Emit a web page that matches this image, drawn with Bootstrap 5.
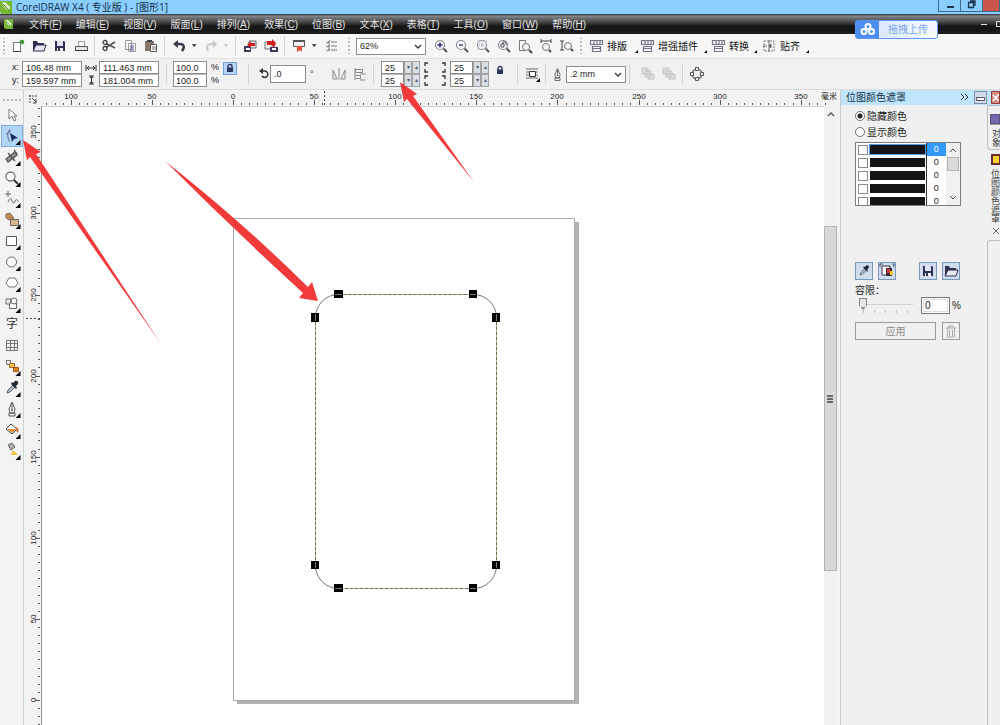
<!DOCTYPE html>
<html lang="zh-CN">
<head>
<meta charset="utf-8">
<meta name="viewport" content="width=device-width, initial-scale=1">
<title>CorelDRAW X4 ( 专业版 ) - [图形1]</title>
<link rel="stylesheet" href="https://cdn.jsdelivr.net/npm/bootstrap@5.3.0/dist/css/bootstrap.min.css">
<style>
body{font-family:"Liberation Sans","Noto Sans CJK SC",sans-serif;font-size:10px;line-height:13px;color:#1c1c1c;background:#f0f0f0;overflow:hidden}
button,input,select{font:inherit;color:inherit;border-radius:0}
button{background:none;border:0;padding:0}
svg{display:block;flex:none}
.titlebar{height:14px;background:#8acdff;font-family:"Open Sans","Noto Sans CJK SC",sans-serif;color:#14303f}
.winctl{height:12px;border:1px solid #3d6a8c;border-top:0}
.winctl button{width:22px;border-right:1px solid #3d6a8c}
.winctl .close-x{width:16px;background:#c9554d;border:0}
.menubar{height:20px;gap:14px;padding-left:29px;background:linear-gradient(#24272c 0,#85878a 2px,#5b5b5b 6px,#252525 11px,#141414 12px,#1b1b1b);color:#e4e4e4}
.menubar a{color:inherit;text-decoration:none;white-space:nowrap}
.upload{left:855px;top:20px;height:19px;width:83px;border-radius:3px;background:#4d8df2;border:1px solid #5b97f3;z-index:3}
.upload span{background:linear-gradient(90deg,#dbe9ff,#f6faff);color:#7ba6e8;border-radius:0 2px 2px 0}
.stdbar{height:25px;background:#f6f6f6;border-bottom:1px solid #e2e2e2}
.propbar{height:31px;padding-left:12px;background:#f1f1f1;border-bottom:1px solid #dcdcdc;font-size:9px}
.cell{width:21px;height:21px;display:flex;align-items:center;justify-content:center;flex:none}
.drop{width:11px;height:21px;display:flex;align-items:center;justify-content:center;flex:none}
.div7{width:7px;height:20px;flex:none;background:linear-gradient(#d2d2d2,#d2d2d2) center/1px 100% no-repeat}
.w14{width:14px}.w22{width:22px}.w17{width:17px}
.grip{width:7px;height:16px;flex:none;background:radial-gradient(circle,#bbb 1px,transparent 1px) center/4px 4px repeat-y}
.pluginbtn{display:flex;align-items:center;gap:3px;white-space:nowrap;flex:none;color:#111}
.field{display:block;height:13px;padding:0 3px;border:1px solid #8c8c8c;background:#fff;line-height:11px;min-width:0}
.field+.field,.spinrow+.spinrow .field{border-top-color:#b8b8b8}
.f60{width:60px}.f34{width:34px;padding:0 2px}.f36{width:36px;height:18px}.f24{width:23px}
.spinrow{display:flex;height:13px}
.spinrow button{width:8px;border:1px solid #a2a2a2;background:#d9dde4;color:#555a6b;font-size:6px;line-height:11px;text-align:center}
.combo{position:relative;flex:none}
.combo select{appearance:none;width:100%;height:17px;border:1px solid #8c8c8c;background:#fff;padding:0 3px;line-height:15px;font-size:9px}
.combo svg{position:absolute;right:4px;top:6px;pointer-events:none}
.lockbtn{width:14px;height:13px;border:1px solid #6ba0d4;background:#b5d5f4;display:flex;align-items:center;justify-content:center;margin-bottom:12px}
.toolbox{width:24px;background:#f3f3f3;border-right:1px solid #cfcfcf;padding:4px 0 0 2px}
.toolbox .tgrip{height:11px;width:20px;background:radial-gradient(circle,#bbb 1px,transparent 1px) 0 4px/4px 4px repeat-x}
.toolbox button{display:block;width:20px;height:20px;margin-bottom:1px}
.toolbox button.active{background:#b3d6f7;outline:1px solid #78b0e2}
.stage{display:grid;grid-template-columns:17px minmax(0,1fr) 16px;grid-template-rows:16px minmax(0,1fr);background:#f3f3f3}
.ruler{position:relative;overflow:hidden}
.toprule{grid-column:2/4}
.paper{position:relative;background:#fefefe;overflow:hidden;border-top:1px solid #d0d0d0;border-left:1px solid #8f8f8f}
.ruler text{font-size:8px;fill:#222;text-anchor:middle}
.vscroll{width:13px;background:#f1f1f1;padding-top:4px}
.vthumb{margin-top:107px;height:345px;background:#d8d8d8;border:1px solid #b4b4b4}
.docker{width:160px;border-left:1px solid #c9c9c9;background:#f0f0f0}
.dhead{height:15px;background:#bfe5fd;padding-left:5px;color:#14303f}
.dhead button{width:13px;height:13px;border:1px solid #7b8ea5;background:#d3dbe8;display:flex;align-items:center;justify-content:center}
.dhead button.shut{width:9px;border-color:#943a36;background:#d98a84}
.dbody{padding:3px 14px 0 14px;width:133px}
.radio{display:flex;align-items:center;gap:2px;height:16px}
.radio input{appearance:none;width:10px;height:10px;border:1px solid #707070;border-radius:50%;background:#fff;margin:0}
.radio input:checked{background:radial-gradient(circle,#222 2px,#fff 3px)}
.masks{width:106px;height:64px;border:1px solid #7d7d7d;background:#fff;margin-top:2px;overflow:hidden}
.masks table{width:90px;border-collapse:collapse;table-layout:fixed;font-size:9px;line-height:13px}
.masks tr{height:13px}
.masks td{padding:0;height:13px}
.masks input{appearance:none;display:block;width:10px;height:10px;border:1px solid #8a8a8a;background:#fff;margin:0 0 0 2px}
.swatch{height:9px;margin:2px 1px;background:#151515}
.masks td:last-child{text-align:center;border-left:1px solid #333}
.masks tr.on td:last-child{background:#3398fb;color:#fff}
.masks tr.on .swatch{outline:1px solid #4ea3ef}
.mscroll{width:14px;background:#f1f1f1}
.mscroll i{display:block;height:14px;border:1px solid #b5b5b5;background:#dadada;margin:0 1px}
.toolbtn{width:18px;height:18px;border:1px solid #7798bb;background:#cfdded;display:flex;align-items:center;justify-content:center}
.tol{appearance:none;width:54px;height:12px;margin:0 0 0 4px;background:linear-gradient(#cfcfcf,#cfcfcf) center/100% 1px no-repeat}
.tol::-webkit-slider-thumb{appearance:none;width:8px;height:12px;background:linear-gradient(#e4e4e4,#e4e4e4) center 1px/6px 8px no-repeat #8c8c8c;clip-path:polygon(0 0,100% 0,100% 65%,50% 100%,0 65%)}
.ticks{height:3px;width:46px;margin-left:8px;background:repeating-linear-gradient(90deg,#c2c2c2 0 1px,transparent 1px 11px)}
.pct{width:29px;height:17px;border:1px solid #777;padding:0 3px;background:#fff;outline:1px solid #ddd;outline-offset:-3px;flex:none}
.apply{height:18px;border:1px solid #9a9a9a;color:#8d8d8d;flex:none}
.tabs{width:13px;overflow:hidden;color:#444}
.tab1{height:45px;border:1px solid #bcbcbc;border-right:0;border-radius:0 0 0 4px;padding:8px 0 0 2px}
.vtext{writing-mode:vertical-rl;line-height:11px;white-space:nowrap;display:block;width:11px;font-size:9px}
.tabs>.vtext{margin-left:2px}
.tabrest{border:1px solid #bcbcbc;border-right:0;border-bottom:0;border-radius:4px 0 0 0}
.notes{left:0;top:0;pointer-events:none;z-index:4}
</style>
<script src="https://cdn.jsdelivr.net/npm/bootstrap@5.3.0/dist/js/bootstrap.bundle.min.js"></script>
</head>
<body>
<svg width="0" height="0" class="position-absolute" aria-hidden="true">
<defs>
<symbol id="down" viewBox="0 0 7 5"><path d="M0 0h6L3 4z" fill="#222"/></symbol>
<symbol id="chev" viewBox="0 0 8 5"><path d="M1 1l3 3 3-3" fill="none" stroke="#333" stroke-width="1.300"/></symbol>
<symbol id="fly" viewBox="0 0 20 20"><path d="M18.500 14v5h-5z" fill="#000"/></symbol>
<symbol id="save" viewBox="0 0 16 16"><path d="M3 3h9l1 1v9H3z" fill="#2f3154"/><path d="M5 3h6v5H5z" fill="#dfe4f3"/><path d="M5 10h6v3H5z" fill="#f5f5f5"/><path d="M6 10h2v3H6z" fill="#2f3154"/></symbol>
<symbol id="open" viewBox="0 0 16 16"><path d="M2 13V3h4l1 2h6v2" fill="#2f3154"/><path d="M2 13l3-6h10l-2 6z" fill="#e6e9f2" stroke="#2f3154"/><path d="M2 13V4h2v6z" fill="#2f3154"/></symbol>
<symbol id="lens" viewBox="0 0 16 16"><circle cx="7" cy="7" r="4.500" fill="#f4f6fb" stroke="#8b8e9a" stroke-width="1.200"/><path d="M10.500 10.500L14 14" stroke="#55535c" stroke-width="2"/></symbol>
<symbol id="plug" viewBox="0 0 16 16"><path d="M2.500 2.500h12v4h-12zM6 2v5M9 2v5M12 2v5M4.500 8.500h8v5h-8zM4.500 10.500h8" fill="none" stroke="#77758a" stroke-width="1.200"/></symbol>
<symbol id="lock" viewBox="0 0 10 10"><path d="M3 5V3.500a2 2 0 0 1 4 0V5" fill="none" stroke="#2c3560" stroke-width="1.300"/><path d="M2 4.500h6V9H2z" fill="#2c3560"/></symbol>
<symbol id="drop" viewBox="0 0 20 20"><path d="M5 15l1-3 5-5 2 2-5 5z" fill="#a9bccd" stroke="#444" stroke-width=".8"/><path d="M9 6l5 5 1-1-1-2 2-2c1-2-1-4-3-3l-2 2-1-1z" fill="#252a38"/></symbol>
<symbol id="nib" viewBox="0 0 20 20"><path d="M10 3L7 10l1 4h4l1-4zM7 14h6v3H7zM10 4v6" fill="#f8f8f8" stroke="#555"/><circle cx="10" cy="11" r="1" fill="#555"/></symbol>
<symbol id="logo" viewBox="0 0 12 13"><path d="M0 0h12v13H2l-2-2z" fill="#78b832"/><path d="M2 2l3-1 5 5-1 4-4-3z" fill="#e9f7d8"/><path d="M3 3l5 5M8 8l2 3" stroke="#3f7d19"/></symbol>
</defs>
</svg>

<div class="vh-100 d-flex flex-column position-relative overflow-hidden">
<header class="titlebar d-flex align-items-center">
  <svg width="12" height="13"><use href="#logo"/></svg>
  <span class="ms-1 text-nowrap">CorelDRAW X4 ( 专业版 ) - [图形1]</span>
  <div class="winctl d-flex ms-auto align-self-start">
    <button aria-label="最小化"><svg width="21" height="11"><path d="M8 6h7v2H8z" fill="#1d3549"/></svg></button>
    <button aria-label="还原"><svg width="21" height="11"><path d="M7.500 2.500h5v5h-5zM9 1h5v5" fill="none" stroke="#1d3549" stroke-width="1.300"/></svg></button>
    <button class="close-x" aria-label="关闭"></button>
  </div>
</header>

<nav class="menubar d-flex align-items-center position-relative">
  <svg class="position-absolute start-0 ms-1" width="9" height="12"><use href="#logo"/></svg>
  <a href="#">文件(<u>F</u>)</a><a href="#">编辑(<u>E</u>)</a><a href="#">视图(<u>V</u>)</a><a href="#">版面(<u>L</u>)</a><a href="#">排列(<u>A</u>)</a><a href="#">效果(<u>C</u>)</a><a href="#">位图(<u>B</u>)</a><a href="#">文本(<u>X</u>)</a><a href="#">表格(<u>T</u>)</a><a href="#">工具(<u>O</u>)</a><a href="#">窗口(<u>W</u>)</a><a href="#">帮助(<u>H</u>)</a>
  <svg class="ms-auto" width="20" height="12"><path d="M1 6h6v1H1zM16 3h4v1h-3v4h3v1h-4z" fill="#ddd"/></svg>
</nav>
<button class="upload position-absolute d-flex align-items-stretch">
  <svg width="23" height="17" viewBox="0 0 23 17"><g fill="none" stroke="#fff" stroke-width="2"><circle cx="12" cy="5.500" r="2.500"/><circle cx="8" cy="10.500" r="2.500"/><circle cx="15.500" cy="10.500" r="2.500"/></g></svg>
  <span class="flex-grow-1 d-flex align-items-center justify-content-center">拖拽上传</span>
</button>

<div class="stdbar d-flex align-items-center">
  <span class="grip"></span>
  <button class="cell" aria-label="新建"><svg width="16" height="16"><path d="M3.500 4.500h7v9h-7z" fill="#fff" stroke="#777"/><path d="M3 13.500h8" fill="none" stroke="#444"/><circle cx="12" cy="4" r="2.300" fill="#3f9a35"/></svg></button>
  <button class="cell" aria-label="打开"><svg width="16" height="16"><use href="#open"/></svg></button>
  <button class="cell" aria-label="保存"><svg width="16" height="16"><use href="#save"/></svg></button>
  <button class="cell" aria-label="打印"><svg width="16" height="16"><path d="M5.500 3.500h6v5h-6z" fill="#fff" stroke="#999"/><path d="M2.500 8.500h12v4h-12z" fill="#e6e6e6" stroke="#555"/><path d="M2 12h13v1H2z" fill="#333"/></svg></button>
  <span class="div7"></span>
  <button class="cell" aria-label="剪切"><svg width="16" height="16"><path d="M14 4L5 9.500M14 10L5 5.500" stroke="#555" stroke-width="1.500"/><circle cx="4" cy="4.500" r="2" fill="none" stroke="#444" stroke-width="1.300"/><circle cx="4" cy="10.500" r="2" fill="none" stroke="#444" stroke-width="1.300"/></svg></button>
  <button class="cell" aria-label="复制"><svg width="16" height="16"><path d="M3.500 2.500h6v9h-6zM6.500 5.500h7v8h-7z" fill="#f4f4f4" stroke="#999"/><path d="M8 8h4M8 10h4M8 12h4" stroke="#555d8a"/></svg></button>
  <button class="cell" aria-label="粘贴"><svg width="16" height="16"><path d="M2 3h9v10H2z" fill="#8a7668"/><path d="M4 2h5v2H4z" fill="#444"/><path d="M7.500 6.500h6v7h-6z" fill="#fff" stroke="#555"/><path d="M9 9h4M9 11h4" stroke="#777"/></svg></button>
  <span class="div7"></span>
  <button class="cell" aria-label="撤消"><svg width="16" height="16"><path d="M4 6h5c4 0 5 3 2 7" fill="none" stroke="#3b3a4a" stroke-width="2.500"/><path d="M2 6l5-4v8z" fill="#3b3a4a"/></svg></button>
  <button class="drop" aria-label="撤消列表"><svg width="5" height="4"><use href="#down"/></svg></button>
  <button class="cell" aria-label="重做"><svg width="16" height="16"><path d="M12 6H8c-4 0-5 3-3 7" fill="none" stroke="#c6c6c6" stroke-width="2"/><path d="M14 6l-4-4v8z" fill="#c6c6c6"/></svg></button>
  <button class="drop opacity-25" aria-label="重做列表"><svg width="5" height="4"><use href="#down"/></svg></button>
  <span class="div7"></span>
  <button class="cell" aria-label="导入"><svg width="16" height="16"><path d="M7 3h7v7H7z" fill="#eee" stroke="#666"/><path d="M2 8h7v6H2z" fill="#3a3c5b"/><path d="M4 10h4v2H4z" fill="#fff"/><path d="M13 5H9V3L5 7l4 3V8h4z" fill="#cf2020"/></svg></button>
  <button class="cell" aria-label="导出"><svg width="16" height="16"><path d="M2 4h7v7H2z" fill="#eee" stroke="#777"/><path d="M7 9h8v5H7z" fill="#3a3c5b"/><path d="M9 10h4v2H9z" fill="#fff"/><path d="M4 3h5V1l4 4-2 5-2-3H4z" fill="#cf2020"/></svg></button>
  <span class="div7"></span>
  <button class="cell" aria-label="应用程序启动器"><svg width="16" height="16"><path d="M2.500 2.500h11v6h-11z" fill="#efefef" stroke="#555"/><path d="M2 2h12v2H2z" fill="#555"/><path d="M6 8h5v6l-2-2-3 2z" fill="#e24a33"/></svg></button>
  <button class="drop" aria-label="启动器列表"><svg width="5" height="4"><use href="#down"/></svg></button>
  <button class="cell" aria-label="选项"><svg width="16" height="16"><path d="M3 4l2 1 2-3M3 8l2 1 2-2M3 12l2 1 2-2M8 4h6M8 8h6M8 12h6M6 3v10" fill="none" stroke="#777"/></svg></button>
  <span class="grip mx-1"></span>
  <div class="combo me-1" style="width:70px"><select aria-label="缩放级别"><option>62%</option></select><svg width="8" height="5"><use href="#chev"/></svg></div>
  <button class="cell" aria-label="放大"><svg width="16" height="16"><use href="#lens"/><path d="M4.500 7h5M7 4.500v5" stroke="#33357a" stroke-width="1.500"/></svg></button>
  <button class="cell" aria-label="缩小"><svg width="16" height="16"><use href="#lens"/><path d="M5 7h4" stroke="#444a7a" stroke-width="1.500"/></svg></button>
  <button class="cell" aria-label="缩放选定对象"><svg width="16" height="16"><use href="#lens"/><path d="M4 7h6M7 4v6" stroke="#8a8a99" stroke-dasharray="1 1"/><path d="M2.500 2.500h9v9h-9z" fill="none" stroke="#aaa" stroke-dasharray="1 2"/></svg></button>
  <button class="cell" aria-label="缩放全部对象"><svg width="16" height="16"><use href="#lens"/><path d="M5 9V6h3v3zM7 6V4h3v3" fill="none" stroke="#555"/></svg></button>
  <button class="cell" aria-label="缩放页面"><svg width="16" height="16"><path d="M2.500 2.500h6v10h-6z" fill="#fff" stroke="#777"/><circle cx="9" cy="9" r="3.500" fill="#f4f4f8" stroke="#777"/><path d="M12 12l3 3" stroke="#444" stroke-width="2"/></svg></button>
  <button class="cell" aria-label="缩放页宽"><svg width="16" height="16"><path d="M3 1v4M13 1v4M3 3h10" stroke="#444"/><circle cx="8" cy="9" r="3.500" fill="#f4f4f8" stroke="#777"/><path d="M11 12l2 2" stroke="#444" stroke-width="2"/></svg></button>
  <button class="cell" aria-label="缩放页高"><svg width="16" height="16"><path d="M1 3h4M1 12h4M3 3v9" stroke="#444"/><circle cx="9" cy="8" r="3.500" fill="#f4f4f8" stroke="#777"/><path d="M12 11l2 2" stroke="#444" stroke-width="2"/></svg></button>
  <span class="grip me-1"></span>
  <button class="pluginbtn"><svg width="16" height="16"><use href="#plug"/></svg>排版<svg width="9" height="16"><path d="M8 12v3H5z"/></svg></button>
  <button class="pluginbtn"><svg width="16" height="16"><use href="#plug"/></svg>增强插件<svg width="9" height="16"><path d="M6 12v3H3z"/></svg></button>
  <button class="pluginbtn"><svg width="16" height="16"><use href="#plug"/></svg>转换<svg width="9" height="16"><path d="M5 12v3H2z"/></svg></button>
  <button class="pluginbtn"><svg width="16" height="16"><path d="M3 3h10v10H3z" fill="none" stroke="#777" stroke-dasharray="2 1"/><path d="M8 2v12M2 8h4M10 6v4L8 8z" stroke="#666" fill="#555"/></svg>贴齐<svg width="9" height="16"><path d="M6 12v3H3z"/></svg></button>
</div>

<div class="propbar d-flex align-items-center">
  <div style="width:10px"><label class="d-block" for="px">x:</label><label class="d-block" for="py">y:</label></div>
  <div><input class="field f60" id="px" value="106.48 mm"><input class="field f60" id="py" value="159.597 mm"></div>
  <svg width="17" height="26"><path d="M4 4v6M14 4v6M5 7h8M7 5L5 7l2 2M11 5l2 2-2 2M7 15h5M7 23h5M9.500 15v8M8 17l1.500-2 1.500 2M8 21l1.500 2 1.500-2" fill="none" stroke="#333"/></svg>
  <div><input class="field f60" aria-label="宽度" value="111.463 mm"><input class="field f60" aria-label="高度" value="181.004 mm"></div>
  <span class="div7 w14"></span>
  <div><input class="field f34" id="sx" value="100.0"><input class="field f34" id="sy" value="100.0"></div>
  <div class="ps-1" style="width:16px"><label class="d-block" for="sx">%</label><label class="d-block" for="sy">%</label></div>
  <button class="lockbtn" aria-label="锁定比率"><svg width="10" height="10"><use href="#lock"/></svg></button>
  <span class="div7 w22"></span>
  <svg width="11" height="12" viewBox="0 0 11 12"><path d="M2 3h4a3.200 3.200 0 1 1-3 5" fill="none" stroke="#333" stroke-width="1.500"/><path d="M4 0v6L0 3z" fill="#333"/></svg>
  <input class="field f36" id="rot" value=".0"><label class="ps-1" style="width:22px" for="rot">°</label>
  <button class="cell" aria-label="镜像"><svg width="16" height="16"><path d="M2 13V4l4 9zM14 13V4l-4 9zM8 2v12" fill="none" stroke="#888"/></svg></button>
  <button class="cell" aria-label="对齐"><svg width="16" height="16"><path d="M3 2v12M3.500 3.500h7v3h-7zM3.500 9.500h5v3h-5M8 8h6M8 14h5" fill="none" stroke="#888"/></svg></button>
  <span class="div7 me-1"></span>
  <div>
    <div class="spinrow"><input class="field f24" aria-label="左上圆角" value="25"><button aria-label="减">▾</button><button aria-label="加">▴</button></div>
    <div class="spinrow"><input class="field f24" aria-label="左下圆角" value="25"><button aria-label="减">▾</button><button aria-label="加">▴</button></div>
  </div>
  <svg width="30" height="26"><path d="M8 2H5v3M5 8v3h3M22 2h3v3M25 8v3h-3M8 15H5v3M5 21v3h3M22 15h3v3M25 21v3h-3" fill="none" stroke="#333" stroke-width="1.300"/></svg>
  <div>
    <div class="spinrow"><input class="field f24" aria-label="右上圆角" value="25"><button aria-label="减">▾</button><button aria-label="加">▴</button></div>
    <div class="spinrow"><input class="field f24" aria-label="右下圆角" value="25"><button aria-label="减">▾</button><button aria-label="加">▴</button></div>
  </div>
  <button class="cell me-1" aria-label="全部圆角"><svg class="mb-2" width="10" height="10"><use href="#lock"/></svg></button>
  <span class="div7"></span>
  <button class="cell" aria-label="段落文本换行"><svg width="16" height="16"><path d="M2 3h12M2 6h3M2 9h3M2 12h12M12 6h2M12 9h2" stroke="#666"/><path d="M5.500 5.500h6v5h-6z" fill="#fff" stroke="#333"/><path d="M16 12v4h-4z"/></svg></button>
  <span class="div7"></span>
  <svg width="17" height="17"><use href="#nib"/></svg>
  <div class="combo" style="width:60px"><select aria-label="轮廓宽度"><option>.2 mm</option></select><svg width="8" height="5"><use href="#chev"/></svg></div>
  <span class="div7 me-1"></span>
  <button class="cell" aria-label="到图层前面"><svg width="16" height="16"><path d="M2 2h6v6H2zM5 5h6v6H5zM8 8h6v5H8z" fill="#ddd" stroke="#c4c4c4"/></svg></button>
  <button class="cell" aria-label="到图层后面"><svg width="16" height="16"><path d="M2 2h6v6H2zM5 5h6v6H5zM8 8h6v5H8z" fill="#ddd" stroke="#c4c4c4"/></svg></button>
  <span class="div7"></span>
  <button class="cell" aria-label="转换为曲线"><svg width="16" height="16"><circle cx="8" cy="8" r="5" fill="none" stroke="#666" stroke-width="1.200"/><path d="M6.500 1.500h3v3h-3zM6.500 11.500h3v3h-3zM1.500 6.500h3v3h-3zM11.500 6.500h3v3h-3z" fill="#f1f1f1" stroke="#555"/></svg></button>
</div>

<main class="d-flex flex-grow-1" style="min-height:0">
  <div class="toolbox flex-shrink-0">
    <div class="tgrip"></div>
    <button aria-label="挑选"><svg width="20" height="20"><path d="M7 4v10l3-3 2 5 2-1-2-4h3z" fill="#fff" stroke="#777"/></svg></button>
    <button class="active" aria-label="形状"><svg width="20" height="20"><path d="M8 3c-3 4-3 8 0 13M4 8l5-3" fill="none" stroke="#668" /><path d="M8 7l8 5-4 1-2 3z" fill="#1e2c60"/><use href="#fly"/></svg></button>
    <button aria-label="裁剪"><svg width="20" height="20"><path d="M4 12l9-7 2 3-9 7zM6 6l7 8M12 3l3 4" fill="#999" stroke="#555" stroke-width="1.300"/><use href="#fly"/></svg></button>
    <button aria-label="缩放"><svg width="20" height="20"><circle cx="8.500" cy="8.500" r="4.500" fill="#fdfdfd" stroke="#777" stroke-width="1.300"/><path d="M12 12l4 4" stroke="#333" stroke-width="2"/><use href="#fly"/></svg></button>
    <button aria-label="手绘"><svg width="20" height="20"><path d="M6 2v6M3 5h6M6 13c2-5 3-4 4-1s2 3 3 0 3 0 4 1" fill="none" stroke="#666"/><use href="#fly"/></svg></button>
    <button aria-label="智能填充"><svg width="20" height="20"><path d="M4 4l4-1 4 5-3 3-5-3z" fill="#c3874e" stroke="#777"/><path d="M8.500 9.500h8v6h-8z" fill="#d8b68c" stroke="#666"/><use href="#fly"/></svg></button>
    <button aria-label="矩形"><svg width="20" height="20"><path d="M4.500 5.500h10v9h-10z" fill="#fff" stroke="#555"/><use href="#fly"/></svg></button>
    <button aria-label="椭圆形"><svg width="20" height="20"><circle cx="9.500" cy="10" r="5" fill="#fff" stroke="#666"/><use href="#fly"/></svg></button>
    <button aria-label="多边形"><svg width="20" height="20"><path d="M7 5h6l3 5-3 4H7l-3-4z" fill="#fff" stroke="#777"/><use href="#fly"/></svg></button>
    <button aria-label="基本形状"><svg width="20" height="20"><path d="M7.500 8.500h7v6h-7z" fill="#fff" stroke="#666"/><circle cx="12" cy="7" r="3" fill="#fff" stroke="#666"/><path d="M4 5l5 0-1 5H4z" fill="#eee" stroke="#666"/><use href="#fly"/></svg></button>
    <button aria-label="文本"><svg width="20" height="20"><text x="4" y="13" font-size="12" fill="#333">字</text></svg></button>
    <button aria-label="表格"><svg width="20" height="20"><path d="M4.500 4.500h11v10h-11zM4 7.500h11M4 11.500h11M8.500 4v10M12.500 4v10" fill="none" stroke="#777"/></svg></button>
    <button aria-label="交互式调和"><svg width="20" height="20"><path d="M4.500 3.500h4v4h-4z" fill="#eee" stroke="#777"/><path d="M7.500 6.500h5v4h-5z" fill="#f4bd57" stroke="#a36a22"/><path d="M11.500 10.500h5v4h-5z" fill="#e37d1e" stroke="#a3551a"/><use href="#fly"/></svg></button>
    <button aria-label="滴管"><svg width="20" height="20"><use href="#drop"/><use href="#fly"/></svg></button>
    <button aria-label="轮廓"><svg width="20" height="20"><use href="#nib"/><use href="#fly"/></svg></button>
    <button aria-label="填充"><svg width="20" height="20"><path d="M4 9l5-5 6 5-5 5z" fill="#fff" stroke="#444"/><path d="M5 9h9l-4 4z" fill="#e38b35"/><path d="M14 8c2 1 2 3 1 4" stroke="#d8702a" stroke-width="2" fill="none"/><use href="#fly"/></svg></button>
    <button aria-label="交互式填充"><svg width="20" height="20"><path d="M6 4l4-2 3 4-4 3z" fill="#aab0b0" stroke="#666"/><path d="M11 9l5 5H9z" fill="#f1c13d"/><use href="#fly"/></svg></button>
  </div>

  <section class="stage flex-grow-1">
    <svg width="17" height="16"><path d="M6 5v9M5 6h9" stroke="#444" stroke-dasharray="2 1"/><path d="M8 8l4 4M12 9v4H9" stroke="#444" fill="none"/></svg>
    <div class="ruler toprule"><svg id="hruler" class="position-absolute w-100 h-100" role="img" aria-label="水平标尺"></svg></div>
    <div class="ruler"><svg id="vruler" class="position-absolute w-100 h-100" role="img" aria-label="垂直标尺"></svg></div>
    <div class="paper">
      <svg class="position-absolute w-100 h-100" role="img" aria-label="圆角矩形">
        <g transform="translate(-42 -107)">
          <path d="M237 701h338V222h4v482H237z" fill="#b3b3b3"/>
          <path d="M233.500 218.500h341v482h-341z" fill="#fff" stroke="#a9a9a9"/>
          <g fill="none">
            <path d="M338.500 294.500H473M496.500 317v248M473 588.500H338M315.500 565V317" stroke="#c5bd92"/>
            <path d="M338.500 294.500H473M496.500 317v248M473 588.500H338M315.500 565V317" stroke="#6d6957" stroke-dasharray="3 2"/>
            <path d="M315.500 317a23 23 0 0 1 23-22.500M473 294.500a23 23 0 0 1 23.500 23M496.500 565a23 23 0 0 1-23.500 23.500M338.500 588.500a23 23 0 0 1-23-23.500" stroke="#777"/>
          </g>
          <path d="M334 290h9v8h-9zM469 290h8v8h-8zM311 313h8v9h-8zM492 313h8v9h-8zM311 561h8v8h-8zM492 561h8v8h-8zM334 584h9v8h-9zM469 584h8v8h-8z"/>
          <path d="M335 294.500h7M470 294.500h6M315.500 314v7M496.500 314v7M315.500 562v6M496.500 562v6M335 588.500h7M470 588.500h6" stroke="#777"/>
        </g>
      </svg>
    </div>
    <div class="vscroll">
      <svg width="13" height="9"><path d="M4 6l3-3 3 3" fill="none" stroke="#555" stroke-width="1.300"/></svg>
      <div class="vthumb d-flex align-items-center justify-content-center"><svg width="7" height="8"><path d="M0 1h6M0 4h6M0 7h6" stroke="#444" stroke-width="1.500"/></svg></div>
    </div>
  </section>

  <aside class="docker flex-shrink-0 d-flex flex-column">
    <div class="dhead d-flex align-items-center"><span class="me-auto">位图颜色遮罩</span>
      <svg class="me-1" width="10" height="9"><path d="M1 1l3 3-3 3M5 1l3 3-3 3" fill="none" stroke="#333"/></svg>
      <button class="me-1" aria-label="卷起"><svg width="9" height="9"><path d="M.500 4.500h8v3h-8z" fill="#fff" stroke="#556"/></svg></button>
      <button class="shut" aria-label="关闭泊坞窗"><svg width="7" height="7"><path d="M1 1l6 6M7 0L1 7" stroke="#fff" stroke-width="1.500"/></svg></button>
    </div>
    <div class="d-flex flex-grow-1">
      <div class="dbody">
        <label class="radio"><input type="radio" name="mode" checked>隐藏颜色</label>
        <label class="radio"><input type="radio" name="mode">显示颜色</label>
        <div class="masks d-flex">
          <table><colgroup><col style="width:13px"><col><col style="width:20px"></colgroup><tbody>
            <tr class="on"><td><input type="checkbox" aria-label="颜色 1"></td><td><div class="swatch"></div></td><td>0</td></tr>
            <tr><td><input type="checkbox" aria-label="颜色 2"></td><td><div class="swatch"></div></td><td>0</td></tr>
            <tr><td><input type="checkbox" aria-label="颜色 3"></td><td><div class="swatch"></div></td><td>0</td></tr>
            <tr><td><input type="checkbox" aria-label="颜色 4"></td><td><div class="swatch"></div></td><td>0</td></tr>
            <tr><td><input type="checkbox" aria-label="颜色 5"></td><td><div class="swatch"></div></td><td>0</td></tr>
          </tbody></table>
          <div class="mscroll d-flex flex-column"><svg width="14" height="14"><path d="M4 9l3-3 3 3" fill="none" stroke="#444"/></svg><i></i><svg class="mt-auto" width="14" height="14"><path d="M4 5l3 3 3-3" fill="none" stroke="#444"/></svg></div>
        </div>
        <div class="d-flex" style="margin-top:56px;gap:5px">
          <button class="toolbtn" aria-label="颜色选择器"><svg width="16" height="16"><use href="#drop"/></svg></button>
          <button class="toolbtn me-auto" aria-label="编辑颜色"><svg width="16" height="16"><path d="M3 3h8v9H3z" fill="#fff" stroke="#334"/><path d="M7 5h6v8H7z" fill="#3a2a35"/><path d="M8 6h3v4H8z" fill="#d5382e"/><path d="M11 8h3v4h-3z" fill="#f2c927"/><path d="M1 1h3M1 1v3M13 1h2v3" stroke="#446" fill="none"/></svg></button>
          <button class="toolbtn" aria-label="保存遮罩"><svg width="16" height="16"><use href="#save"/></svg></button>
          <button class="toolbtn" aria-label="打开遮罩"><svg width="16" height="16"><use href="#open"/></svg></button>
        </div>
        <label class="d-block mt-1" for="tol">容限：</label>
        <div class="d-flex align-items-center">
          <div class="me-2"><input class="tol d-block" id="tol" type="range" min="0" max="100" value="0"><div class="ticks"></div></div>
          <input class="pct" id="pct" value="0"><label style="padding-left:2px" for="pct">%</label>
        </div>
        <div class="d-flex mt-2 gap-1"><button class="apply" style="width:81px">应用</button>
          <button class="apply d-flex align-items-center justify-content-center ms-auto" style="width:18px" aria-label="删除遮罩"><svg width="12" height="13"><path d="M1 3h10M4 3V1h4v2M2.500 3v9h7V3M4.500 5v6M7.500 5v6" fill="none" stroke="#aaa"/></svg></button></div>
      </div>
      <div class="tabs d-flex flex-column ms-auto">
        <div class="tab1"><svg width="10" height="11"><path d="M0 0h10v10H0z" fill="#7268b0" stroke="#444" /></svg><span class="vtext mt-1">对象</span></div>
        <svg class="mt-1 ms-1" width="9" height="11"><path d="M1 1h8v9H1z" fill="#f4d32f" stroke="#6b2d2d" stroke-width="2"/></svg>
        <span class="vtext mt-1">位图颜色遮罩</span>
        <svg class="ms-1 mt-1" width="9" height="9"><path d="M2 1l6 6M8 1L2 7" stroke="#666"/></svg>
        <div class="tabrest flex-grow-1 mt-1"></div>
      </div>
    </div>
  </aside>
</main>

<svg class="notes position-absolute w-100 h-100" aria-hidden="true"><g fill="#f33a3a">
  <path d="M23 140l18 12-5 2L161 344 30 157l-3 3z"/>
  <path d="M318 301l-19-3 4-5Q232 228 165 161 240 220 308 287l4-5z"/>
  <path d="M400 82l17 12-4 2L474 182 407 99l-3 3z"/>
</g></svg>
</div>
<script>
// Rulers: the page zero point in ruler pixels, and pixels per millimetre at 62% zoom.
const SCALE = 1.622, NS = 'http://www.w3.org/2000/svg';
function add(svg, tag, attrs, text) {
  const el = document.createElementNS(NS, tag);
  for (const k in attrs) el.setAttribute(k, attrs[k]);
  if (text !== undefined) el.textContent = text;
  svg.append(el);
}
const h = document.getElementById('hruler'), v = document.getElementById('vruler');
let d = '';
for (let mm = -115; mm <= 365; mm += 5) {
  const x = Math.round(192 + mm * SCALE), major = mm % 50 === 0;
  d += `M${x}.5 ${major ? 10 : 13}V15`;
  if (major) add(h, 'text', {x, y: 9}, Math.abs(mm));
}
add(h, 'path', {d, stroke: '#555'});
add(h, 'path', {d: 'M283.5 1V15', stroke: '#444', 'stroke-dasharray': '2 2'});
add(h, 'text', {x: 788, y: 9}, '毫米');
d = '';
for (let mm = -15; mm <= 365; mm += 5) {
  const y = Math.round(594 - mm * SCALE), major = mm % 50 === 0;
  d += `M${major ? 11 : 14} ${y}.5H16`;
  if (major) add(v, 'text', {transform: `translate(12 ${y}) rotate(-90)`}, Math.abs(mm));
}
add(v, 'path', {d, stroke: '#555'});
add(v, 'path', {d: 'M2 212.5H16', stroke: '#444', 'stroke-dasharray': '2 2'});
</script>
</body>
</html>
